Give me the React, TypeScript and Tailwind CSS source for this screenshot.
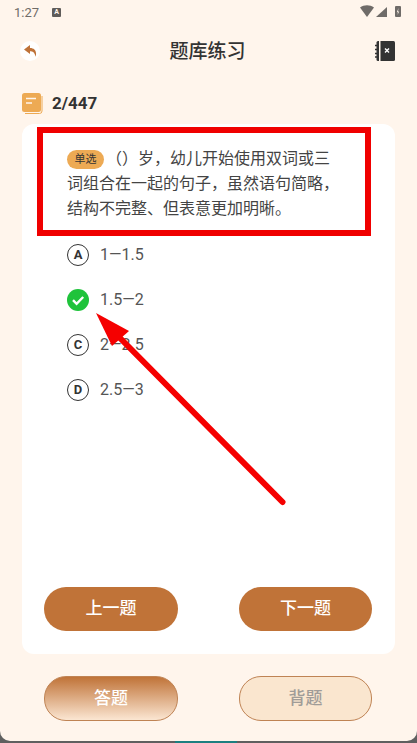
const OPTIONS = [
  { key: "A", text: "1—1.5" },
  { key: "B", text: "1.5—2", correct: true },
  { key: "C", text: "2—2.5" },
  { key: "D", text: "2.5—3" },
];

const FONT = "font-['Roboto','Noto_Sans_CJK_SC',sans-serif]";

function StatusBar() {
  return (
    <div className="flex h-[24px] items-center justify-between pl-[14px] pr-[14px] text-[#6f6b68]">
      <div className="flex items-center gap-[13px]">
        <span className="text-[13px] leading-none">1:27</span>
        <span className="flex size-[9px] items-center justify-center rounded-[1px] bg-[#5f5c5a] text-[7px] font-bold leading-none text-[#fff5ec]">
          A
        </span>
      </div>
      <svg width="43" height="14" viewBox="0 0 43 14" fill="currentColor" aria-hidden>
        <path d="M0 2.500C4-.5 10-.5 14 2.500L7 12z" />
        <path d="M16 12 27 2v10z" />
        <rect x="35" y="1" width="6" height="11" rx="1" />
        <path d="M38.500 3 36.800 7.300h1.200L37.500 10l1.700-3.600H38z" fill="#fff5ec" />
      </svg>
    </div>
  );
}

function Header() {
  return (
    <div className="mt-[15px] flex h-[24px] items-center justify-between pl-[20px] pr-[22px]">
      <span className="flex size-[20px] items-center justify-center rounded-full bg-white">
        <svg width="13" height="12" viewBox="0 0 13 12" fill="#bf7238" aria-hidden>
          <path d="M6 0 0 4.600 6 9V6.300c2.700 0 4.600 1 5.600 5.400C13.200 6 10.500 3 6 2.900z" />
        </svg>
      </span>
      <h1 className="text-[19px] font-medium leading-none text-[#333]">题库练习</h1>
      <svg width="20" height="20" viewBox="0 0 20 20" aria-hidden>
        <rect x="1.500" y="0" width="18.500" height="20" rx="1.500" fill="#333" />
        <rect x="4" y="0" width="1.500" height="20" fill="#fff5ec" />
        <path d="M0 4.500h4M0 8.500h4M0 12.500h4M0 16h4" stroke="#333" strokeWidth="1.500" />
        <path d="M10 7.500l4 4M14 7.500l-4 4" stroke="#fff" strokeWidth="1.400" />
      </svg>
    </div>
  );
}

function Counter() {
  return (
    <div className="mt-[29px] flex h-[22px] items-center gap-[9px] pl-[22px]">
      <svg width="21" height="21" viewBox="0 0 21 21" aria-hidden>
        <path d="M20 3v15a2.500 2.500 0 0 1-2.500 2.500H3" fill="none" stroke="#edaa54" strokeWidth="1" />
        <rect x="0" y="0" width="19" height="19" rx="2.500" fill="#edaa54" />
        <path d="M4 5.500h10M4 10h6" stroke="#fff5ec" strokeWidth="1.500" />
      </svg>
      <span className="text-[17px] font-bold leading-none text-[#333]">2/447</span>
    </div>
  );
}

function Option({ option }: { option: (typeof OPTIONS)[number] }) {
  return (
    <div className="flex h-[45px] items-center gap-[11px]">
      {option.correct ? (
        <svg width="22" height="22" viewBox="0 0 22 22" aria-hidden>
          <circle cx="11" cy="11" r="11" fill="#1fc33b" />
          <path d="M6 11.200l3.600 3.600L16.200 8" fill="none" stroke="#fff" strokeWidth="2.400" />
        </svg>
      ) : (
        <span className="flex size-[22px] items-center justify-center rounded-full border border-[#333] text-[13px] font-bold leading-none text-[#333]">
          {option.key}
        </span>
      )}
      <span className="text-[16px] leading-none text-[#555]">{option.text}</span>
    </div>
  );
}

function QuestionCard() {
  return (
    <section className="mx-[22px] mt-[10px] flex h-[530px] flex-col rounded-[12px] bg-white">
      <p className="ml-[45px] mt-[22px] w-[275px] text-[16px] leading-[25px] text-[#444]">
        <span className="mr-[2px] inline-flex h-[19px] w-[37px] items-center justify-center rounded-full bg-[#edaa54] align-[1px] text-[11px] leading-none text-[#333]">
          单选
        </span>
        （）岁，幼儿开始使用双词或三词组合在一起的句子，虽然语句简略，结构不完整、但表意更加明晰。
      </p>
      <div className="mt-[11px] flex flex-col pl-[45px]">
        {OPTIONS.map((o) => (
          <Option key={o.key} option={o} />
        ))}
      </div>
      <div className="mt-auto mb-[23px] flex justify-between pl-[22px] pr-[23px]">
        <button className="h-[44px] w-[134px] rounded-full bg-[#c07338] text-[17px] font-medium text-white">
          上一题
        </button>
        <button className="h-[44px] w-[133px] rounded-full bg-[#c07338] text-[17px] font-medium text-white">
          下一题
        </button>
      </div>
    </section>
  );
}

export default function App() {
  return (
    <div className={`relative h-[743px] w-[417px] overflow-hidden bg-[#5f5f5f] ${FONT}`}>
      <div className="h-[741px] rounded-b-[10px] bg-[#fff5ec]">
        <StatusBar />
        <Header />
        <Counter />
        <QuestionCard />
        <div className="mt-[22px] flex justify-between pl-[44px] pr-[45px]">
          <button className="h-[45px] w-[134px] rounded-[22px] border border-[#bf8354] bg-[linear-gradient(180deg,#c07338,#fbe6d2)] text-[17px] font-medium text-white">
            答题
          </button>
          <button className="h-[45px] w-[133px] rounded-[22px] border border-[#bf8354] bg-[#fae6cf] text-[17px] font-medium text-[#a09c98]">
            背题
          </button>
        </div>
      </div>
      <div className="absolute bottom-0 left-[175px] h-[2px] w-[62px] bg-[#1c7f80]" />

      {/* annotations drawn over the screenshot */}
      <div className="absolute left-[37px] top-[127px] h-[109px] w-[334px] border-[6px] border-[#f00000]" />
      <svg className="absolute left-0 top-0" width="417" height="743" viewBox="0 0 417 743" aria-hidden>
        <path d="M282.500 502 118 336" stroke="#f50000" strokeWidth="6" strokeLinecap="round" />
        <path d="M96 313 129 331 112 346z" fill="#f50000" />
      </svg>
    </div>
  );
}
